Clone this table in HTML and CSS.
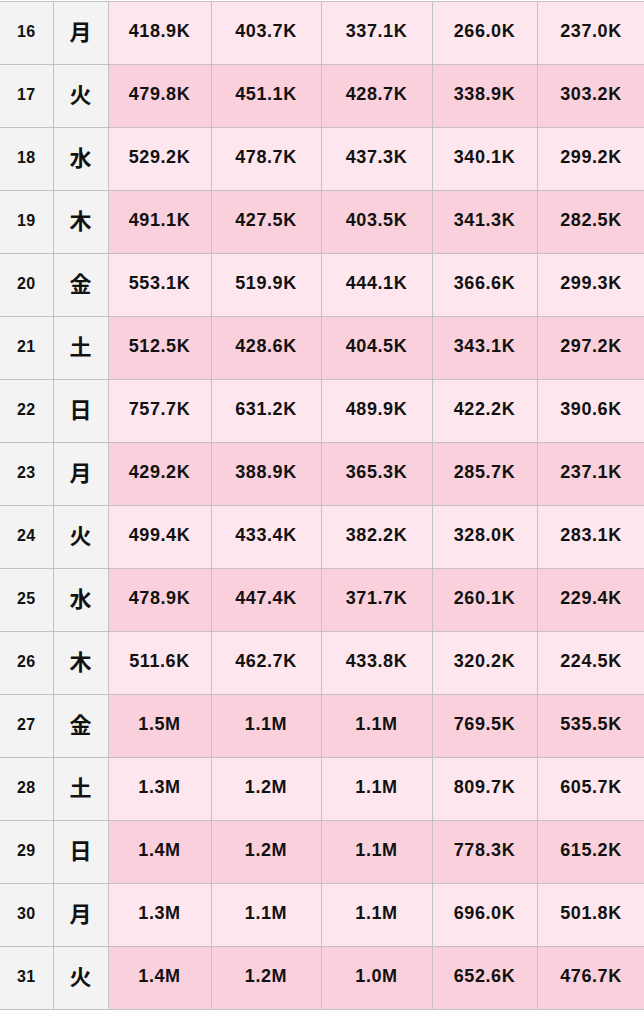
FILE: index.html
```html
<!DOCTYPE html>
<html lang="ja">
<head>
<meta charset="utf-8">
<title>日別データ</title>
<link rel="stylesheet" href="styles.css">
</head>
<body>
<table class="grid">
<colgroup>
<col class="c-day"><col class="c-wd"><col class="c-v1"><col class="c-v2"><col class="c-v3"><col class="c-v4"><col class="c-v5">
</colgroup>
<tbody>
<tr class="odd"><td class="day">16</td><td class="wd">月</td><td>418.9K</td><td>403.7K</td><td>337.1K</td><td>266.0K</td><td>237.0K</td></tr>
<tr class="even"><td class="day">17</td><td class="wd">火</td><td>479.8K</td><td>451.1K</td><td>428.7K</td><td>338.9K</td><td>303.2K</td></tr>
<tr class="odd"><td class="day">18</td><td class="wd">水</td><td>529.2K</td><td>478.7K</td><td>437.3K</td><td>340.1K</td><td>299.2K</td></tr>
<tr class="even"><td class="day">19</td><td class="wd">木</td><td>491.1K</td><td>427.5K</td><td>403.5K</td><td>341.3K</td><td>282.5K</td></tr>
<tr class="odd"><td class="day">20</td><td class="wd">金</td><td>553.1K</td><td>519.9K</td><td>444.1K</td><td>366.6K</td><td>299.3K</td></tr>
<tr class="even"><td class="day">21</td><td class="wd">土</td><td>512.5K</td><td>428.6K</td><td>404.5K</td><td>343.1K</td><td>297.2K</td></tr>
<tr class="odd"><td class="day">22</td><td class="wd">日</td><td>757.7K</td><td>631.2K</td><td>489.9K</td><td>422.2K</td><td>390.6K</td></tr>
<tr class="even"><td class="day">23</td><td class="wd">月</td><td>429.2K</td><td>388.9K</td><td>365.3K</td><td>285.7K</td><td>237.1K</td></tr>
<tr class="odd"><td class="day">24</td><td class="wd">火</td><td>499.4K</td><td>433.4K</td><td>382.2K</td><td>328.0K</td><td>283.1K</td></tr>
<tr class="even"><td class="day">25</td><td class="wd">水</td><td>478.9K</td><td>447.4K</td><td>371.7K</td><td>260.1K</td><td>229.4K</td></tr>
<tr class="odd"><td class="day">26</td><td class="wd">木</td><td>511.6K</td><td>462.7K</td><td>433.8K</td><td>320.2K</td><td>224.5K</td></tr>
<tr class="even"><td class="day">27</td><td class="wd">金</td><td>1.5M</td><td>1.1M</td><td>1.1M</td><td>769.5K</td><td>535.5K</td></tr>
<tr class="odd"><td class="day">28</td><td class="wd">土</td><td>1.3M</td><td>1.2M</td><td>1.1M</td><td>809.7K</td><td>605.7K</td></tr>
<tr class="even"><td class="day">29</td><td class="wd">日</td><td>1.4M</td><td>1.2M</td><td>1.1M</td><td>778.3K</td><td>615.2K</td></tr>
<tr class="odd"><td class="day">30</td><td class="wd">月</td><td>1.3M</td><td>1.1M</td><td>1.1M</td><td>696.0K</td><td>501.8K</td></tr>
<tr class="even"><td class="day">31</td><td class="wd">火</td><td>1.4M</td><td>1.2M</td><td>1.0M</td><td>652.6K</td><td>476.7K</td></tr>
</tbody>
</table>
</body>
</html>
```
FILE: styles.css
```css
html, body {
  margin: 0;
  padding: 0;
  background: #ffffff;
}
body {
  padding-top: 1px;
  overflow: hidden;
  font-family: "Liberation Sans", Arial, "Noto Sans CJK JP", sans-serif;
  color: #111111;
}
.grid {
  border-collapse: collapse;
  table-layout: fixed;
  width: 645px;
  border-left: hidden;
}
.c-day { width: 53px; }
.c-wd { width: 55px; }
.c-v1 { width: 103px; }
.c-v2 { width: 110px; }
.c-v3 { width: 111px; }
.c-v4 { width: 105px; }
.c-v5 { width: 108px; }
.grid td {
  height: 59px;
  padding: 0 0 3px 0;
  border: 1px solid #c2c2c2;
  text-align: center;
  vertical-align: middle;
  font-weight: 700;
  font-size: 18px;
  letter-spacing: 0.6px;
}
.odd td { background: #fde6ed; }
.even td { background: #f9d0db; }
.grid td.day {
  background: #f3f3f3;
  font-size: 16px;
  letter-spacing: 0.3px;
}
.grid td.wd {
  background: #f3f3f3;
  font-family: "Noto Sans CJK JP", sans-serif;
  font-size: 22px;
  line-height: 1;
  letter-spacing: 0;
  padding-bottom: 7px;
  height: 55px;
}
```
